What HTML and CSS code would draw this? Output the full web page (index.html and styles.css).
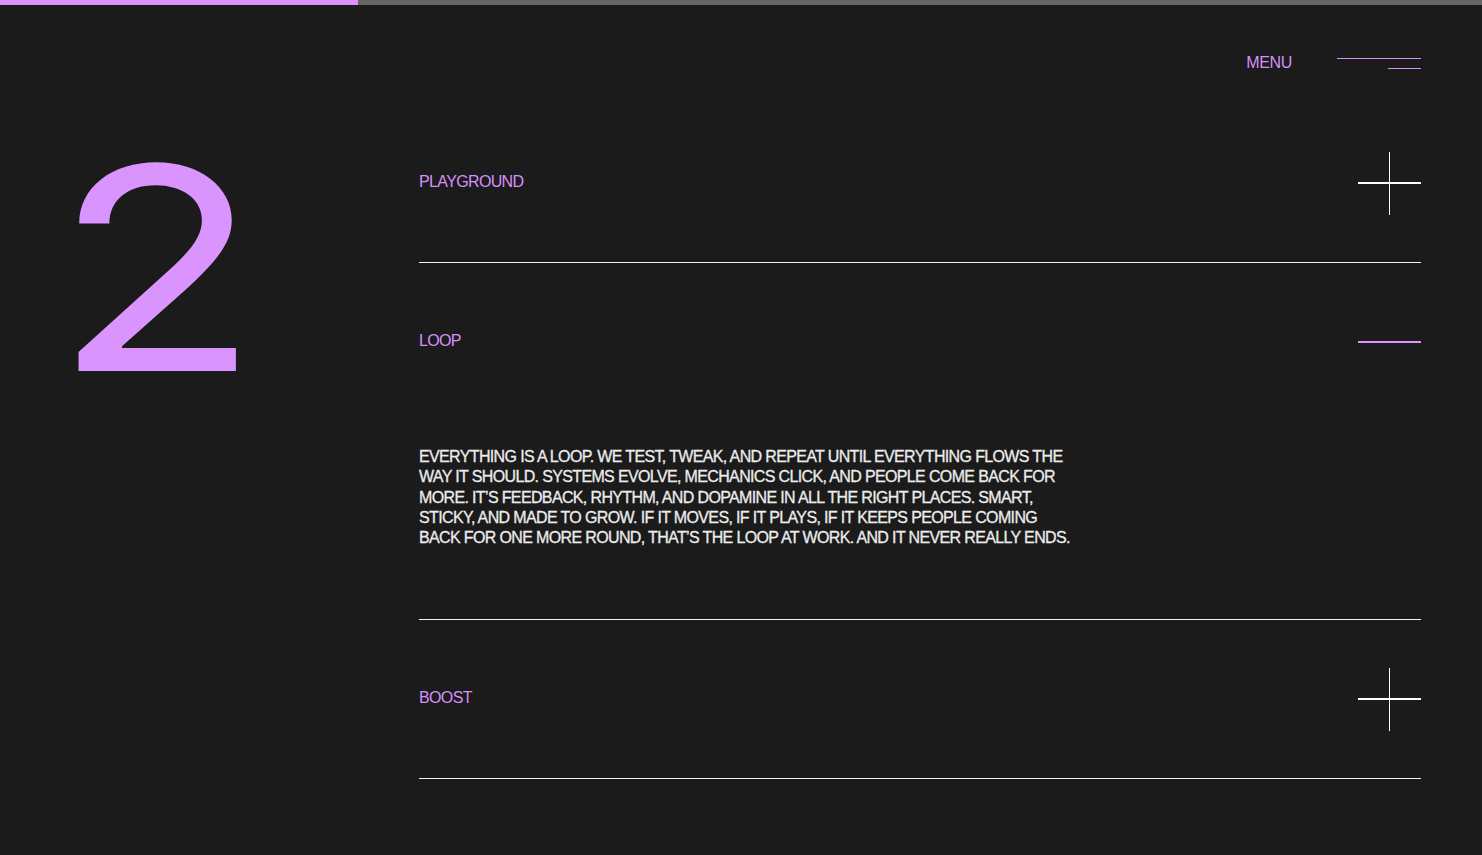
FILE: index.html
```html
<!DOCTYPE html>
<html lang="en">
<head>
  <meta charset="UTF-8">
  <meta name="viewport" content="width=device-width, initial-scale=1.0">
  <title>Services</title>
  <link rel="stylesheet" href="styles.css">
</head>
<body>

  <div class="progress">
    <div class="progress-fill" style="width: 24.16%"></div>
  </div>

  <header class="topbar">
    <span class="menu-label">MENU</span>
    <div class="burger">
      <span class="burger-long"></span>
      <span class="burger-short"></span>
    </div>
  </header>

  <main class="content">
    <div class="number">2</div>

    <div class="accordion">
      <div class="item">
        <div class="item-head">
          <span class="item-title">PLAYGROUND</span>
          <span class="toggle plus"></span>
        </div>
      </div>

      <div class="item open">
        <div class="item-head">
          <span class="item-title">LOOP</span>
          <span class="toggle minus"></span>
        </div>
        <div class="item-body">
          <p>EVERYTHING IS A LOOP. WE TEST, TWEAK, AND REPEAT UNTIL EVERYTHING FLOWS THE WAY IT SHOULD. SYSTEMS EVOLVE, MECHANICS CLICK, AND PEOPLE COME BACK FOR MORE. IT’S FEEDBACK, RHYTHM, AND DOPAMINE IN ALL THE RIGHT PLACES. SMART, STICKY, AND MADE TO GROW. IF IT MOVES, IF IT PLAYS, IF IT KEEPS PEOPLE COMING BACK FOR ONE MORE ROUND, THAT’S THE LOOP AT WORK. AND IT NEVER REALLY ENDS.</p>
        </div>
      </div>

      <div class="item">
        <div class="item-head">
          <span class="item-title">BOOST</span>
          <span class="toggle plus"></span>
        </div>
      </div>
    </div>
  </main>

</body>
</html>
```

FILE: styles.css
```css
body {
  margin: 0;
  background-color: #1b1b1b;
  font-family: "Liberation Sans", Arial, sans-serif;
  color: #ececec;
  min-height: 100vh;
}
.progress {
  height: 5px;
  background-color: #666666;
}
.progress-fill {
  height: 100%;
  background-color: #da94fd;
}
.topbar {
  display: flex;
  justify-content: flex-end;
  align-items: center;
  gap: 45px;
  padding: 48px 61px 0;
  height: 20px;
}
.menu-label {
  color: #d690fa;
  font-size: 16px;
  letter-spacing: -0.02em;
}
.burger {
  display: flex;
  flex-direction: column;
  align-items: flex-end;
  gap: 9px;
}
.burger span {
  display: block;
  height: 1px;
  background-color: #d690fa;
}
.burger-long {
  width: 84px;
}
.burger-short {
  width: 33px;
}
.content {
  display: grid;
  grid-template-columns: 341px 1fr;
  padding: 31px 61px 0 78px;
}
.number {
  font-family: Inter, sans-serif;
  font-size: 283px;
  font-weight: 400;
  line-height: 1;
  color: #da94fd;
  margin-left: -25px;
  margin-top: 23px;
  transform: scaleX(1.2);
  transform-origin: left top;
}
.item {
  border-bottom: 1px solid #f2f2f2;
}
.item-head {
  display: flex;
  justify-content: space-between;
  align-items: center;
  padding: 48px 0 47px;
}
.item-title {
  color: #d690fa;
  font-size: 16px;
  letter-spacing: -0.04em;
  margin-bottom: 3px;
}
.toggle {
  position: relative;
  width: 63px;
  height: 63px;
}
.toggle::before,
.toggle::after {
  content: "";
  position: absolute;
  background-color: #ffffff;
}
.plus::before {
  left: 0;
  right: 0;
  top: 30px;
  height: 2px;
}
.plus::after {
  top: 0;
  bottom: 0;
  left: 31px;
  width: 1px;
}
.minus::before {
  left: 0;
  right: 0;
  top: 30px;
  height: 2px;
  background-color: #da94fd;
}
.minus::after {
  display: none;
}
.item-body {
  padding: 26px 0 71px;
}
.item-body p {
  margin: 0;
  max-width: 659px;
  font-size: 16px;
  line-height: 20.3px;
  letter-spacing: -0.04em;
  -webkit-text-stroke: 0.3px #ececec;
}
```
